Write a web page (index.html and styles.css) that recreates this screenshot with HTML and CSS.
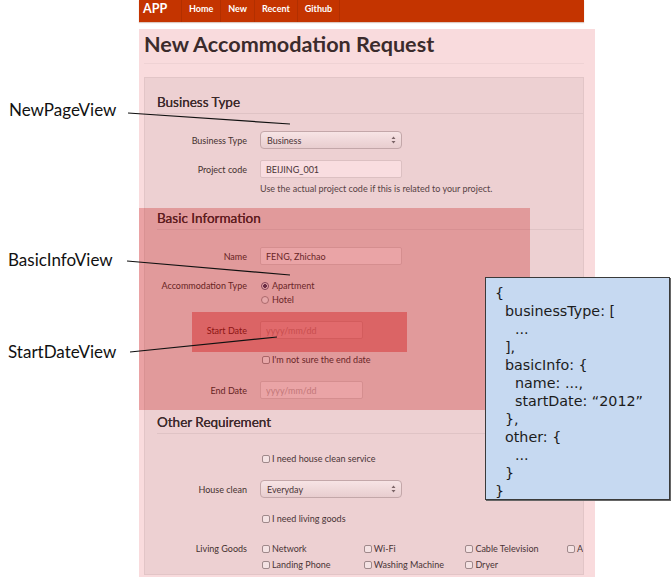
FILE: index.html
```html
<!DOCTYPE html>
<html>
<head>
<meta charset="utf-8">
<link rel="stylesheet" href="styles.css">
</head>
<body>
<div class="app">
  <nav class="navbar">
    <span class="brand">APP</span>
    <ul class="nav">
      <li>Home</li>
      <li>New</li>
      <li>Recent</li>
      <li>Github</li>
    </ul>
  </nav>
  <main class="page">
    <h1 class="title">New Accommodation Request</h1>
    <form class="well">
      <h2 class="legend legend-first">Business Type</h2>
      <div class="row row-after-legend">
        <span class="lbl">Business Type</span>
        <div class="select"><span>Business</span>
          <svg class="arrows" width="5" height="8" viewBox="0 0 5 8"><path d="M2.5 0.5 L4.5 3 L0.5 3 Z M2.5 7.5 L4.5 5 L0.5 5 Z" fill="#7a6466"/></svg>
        </div>
      </div>
      <div class="row row-tight">
        <span class="lbl">Project code</span>
        <input class="input" type="text" value="BEIJING_001">
      </div>
      <p class="help">Use the actual project code if this is related to your project.</p>

      <h2 class="legend legend-next">Basic Information</h2>
      <div class="row row-after-legend">
        <span class="lbl">Name</span>
        <input class="input" type="text" value="FENG, Zhichao">
      </div>
      <div class="row row-top row-std">
        <span class="lbl lbl-line">Accommodation Type</span>
        <div class="options">
          <span class="option"><span class="radio radio-on"></span>Apartment</span>
          <span class="option"><span class="radio"></span>Hotel</span>
        </div>
      </div>
      <div class="row row-std">
        <span class="lbl">Start Date</span>
        <input class="input input-date" type="text" placeholder="yyyy/mm/dd">
      </div>
      <div class="row row-std">
        <span class="lbl"></span>
        <span class="option"><span class="box"></span>I'm not sure the end date</span>
      </div>
      <div class="row row-std">
        <span class="lbl">End Date</span>
        <input class="input input-date" type="text" placeholder="yyyy/mm/dd">
      </div>

      <h2 class="legend legend-next">Other Requirement</h2>
      <div class="row row-after-legend2">
        <span class="lbl"></span>
        <span class="option"><span class="box"></span>I need house clean service</span>
      </div>
      <div class="row row-std">
        <span class="lbl">House clean</span>
        <div class="select"><span>Everyday</span>
          <svg class="arrows" width="5" height="8" viewBox="0 0 5 8"><path d="M2.5 0.5 L4.5 3 L0.5 3 Z M2.5 7.5 L4.5 5 L0.5 5 Z" fill="#7a6466"/></svg>
        </div>
      </div>
      <div class="row row-std">
        <span class="lbl"></span>
        <span class="option"><span class="box"></span>I need living goods</span>
      </div>
      <div class="row row-top row-goods">
        <span class="lbl lbl-goods">Living Goods</span>
        <div class="goods">
          <span class="option option-g"><span class="box"></span>Network</span>
          <span class="option option-g"><span class="box"></span>Wi-Fi</span>
          <span class="option option-g"><span class="box"></span>Cable Television</span>
          <span class="option option-g"><span class="box"></span>Air Conditioner</span>
          <span class="option option-g"><span class="box"></span>Landing Phone</span>
          <span class="option option-g"><span class="box"></span>Washing Machine</span>
          <span class="option option-g"><span class="box"></span>Dryer</span>
        </div>
      </div>
    </form>
  </main>
</div>

<div class="hl hl-basic"></div>
<div class="hl hl-start"></div>

<svg class="leaders" width="671" height="582" viewBox="0 0 671 582">
  <line x1="128" y1="113" x2="290" y2="124" />
  <line x1="127" y1="261" x2="290" y2="275" />
  <line x1="130" y1="352" x2="277" y2="337" />
</svg>
<span class="note note-page">NewPageView</span>
<span class="note note-basic">BasicInfoView</span>
<span class="note note-start">StartDateView</span>

<div class="json">
  <div>{</div>
  <div class="i1">businessType: [</div>
  <div class="i2">...</div>
  <div class="i1">],</div>
  <div class="i1">basicInfo: {</div>
  <div class="i2">name: ...,</div>
  <div class="i2">startDate: “2012”</div>
  <div class="i1">},</div>
  <div class="i1">other: {</div>
  <div class="i2">...</div>
  <div class="i1">}</div>
  <div>}</div>
</div>
</body>
</html>
```
FILE: styles.css
```css
* { box-sizing: border-box; margin: 0; padding: 0; }
html, body { width: 671px; height: 582px; overflow: hidden; background: #fff; }
body { position: relative; font-family: Lato, "Open Sans", sans-serif; color: #4a3436; }

.app { margin-left: 139px; width: 456px; }

.navbar { display: flex; width: 445px; height: 22px; background: #c43400; box-shadow: 0 1px 1px rgba(120, 30, 0, .25); }
.brand { width: 42px; padding-left: 4px; color: #fff; font-weight: 700; font-size: 12.5px; line-height: 18px; }
.nav { display: flex; list-style: none; }
.nav li { height: 22px; padding: 0 7px; border-left: 1px solid #b22f00; color: #fff; font-weight: 700; font-size: 9px; line-height: 18px; }
.nav li:last-child { border-right: 1px solid #b22f00; }

.page { margin-top: 7px; height: 548px; background: #f9dbdd; padding-top: 3px; }
.title { margin-left: 5px; width: 440px; font-size: 21.6px; line-height: 25px; font-weight: 700; color: #3b2b2c; padding-bottom: 6px; border-bottom: 1px solid #efd2d4; }

.well { margin: 13px 0 0 5px; width: 440px; height: 498px; border: 1px solid #e2c5c7; background: #edd0d2; padding-left: 12px; overflow: hidden; }

.legend { font-size: 13.5px; line-height: 18px; font-weight: 400; color: #3c292b; padding-bottom: 2px; border-bottom: 1px solid #dfc3c5; text-shadow: 0 0 0.4px #3c292b; }
.legend-first { margin-top: 15px; }
.legend-next { margin-top: 14px; }

.row { display: flex; align-items: center; }
.row-top { align-items: flex-start; }
.row-after-legend { margin-top: 17px; }
.row-after-legend2 { margin-top: 18px; }
.row-tight { margin-top: 11px; }
.row-std { margin-top: 14px; }
.row-goods { margin-top: 15px; }

.lbl { flex: none; width: 90px; margin-right: 13px; text-align: right; font-size: 9px; color: #45302f; }
.lbl-line { line-height: 14px; }
.lbl-goods { line-height: 16px; }

.select { flex: none; display: flex; align-items: center; justify-content: space-between; width: 142px; height: 18px; padding: 0 5px 0 6px; border: 1px solid #c3a7a9; border-radius: 4px; background: linear-gradient(#f7e4e5, #e8cdcf); font-size: 9px; color: #4a3436; }
.arrows { display: block; }

.input { flex: none; width: 142px; height: 18px; padding: 0 5px; border: 1px solid #dcc0c2; border-radius: 2px; background: #f9dde0; font-family: Lato, "Open Sans", sans-serif; font-size: 9px; color: #4a3436; outline: none; }
.input::placeholder { color: #c3a3a5; }
.input-date { width: 103px; }

.help { margin: 5px 0 0 103px; font-size: 9px; line-height: 12px; color: #574244; }

.options { display: flex; flex-direction: column; }
.option { display: flex; align-items: center; font-size: 9px; line-height: 14px; color: #4a3436; white-space: nowrap; }
.radio { flex: none; width: 8px; height: 8px; margin: 0 3px 0 1px; border: 1px solid #a48e92; border-radius: 50%; background: #f3e2e4; }
.radio-on { border-color: #6f5a74; background: radial-gradient(circle, #4d3d5c 0 1.6px, #f3e2e4 2.2px); }
.box { flex: none; width: 8px; height: 8px; margin: 0 2px 0 2px; border: 1px solid #9f898b; border-radius: 2px; background: #f4e2e3; }

.goods { display: grid; grid-template-columns: repeat(4, 101.7px); }
.option-g { line-height: 16px; }

.hl { position: absolute; }
.hl-basic { left: 139px; top: 208px; width: 391px; height: 202px; background: rgba(195, 0, 0, .26); }
.hl-start { left: 192px; top: 312px; width: 215px; height: 40px; background: rgba(210, 0, 0, .35); }

.leaders { position: absolute; left: 0; top: 0; }
.leaders line { stroke: #111; stroke-width: 1.2; }

.note { position: absolute; left: 9px; font-family: Lato, "Open Sans", sans-serif; font-size: 17px; line-height: 20px; color: #111; }
.note-page { top: 100px; }
.note-basic { top: 250px; left: 8px; }
.note-start { top: 342px; left: 8px; }

.json { position: absolute; left: 485px; top: 277px; width: 185px; height: 223px; padding: 6px 0 0 9px; border: 1px solid #3a3a3a; box-shadow: 1px 1px 0 #666; background: #c6d9f1; font-family: "DejaVu Sans", Verdana, sans-serif; font-size: 14.3px; line-height: 18px; color: #1c1c1c; }
.json .i1 { padding-left: 10px; }
.json .i2 { padding-left: 20px; }
```
